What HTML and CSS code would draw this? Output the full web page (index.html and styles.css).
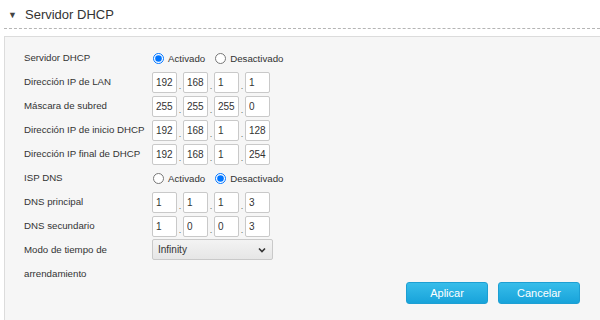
FILE: index.html
```html
<!DOCTYPE html>
<html lang="es">
<head>
  <meta charset="UTF-8">
  <meta name="viewport" content="width=device-width, initial-scale=1.0">
  <title>Servidor DHCP</title>
  <link rel="stylesheet" href="styles.css">
</head>
<body>
  <div class="section">
    <h2 class="section-title"><span class="caret">&#9660;</span>Servidor DHCP</h2>

    <div class="panel">
      <div class="form">
        <label class="form-label">Servidor DHCP</label>
        <div class="form-field">
          <label class="radio"><input type="radio" name="dhcp" checked> Activado</label>
          <label class="radio"><input type="radio" name="dhcp"> Desactivado</label>
        </div>

        <label class="form-label">Dirección IP de LAN</label>
        <div class="form-field ip">
          <input type="text" value="192"><span class="dot">.</span><input type="text" value="168"><span class="dot">.</span><input type="text" value="1"><span class="dot">.</span><input type="text" value="1">
        </div>

        <label class="form-label">Máscara de subred</label>
        <div class="form-field ip">
          <input type="text" value="255"><span class="dot">.</span><input type="text" value="255"><span class="dot">.</span><input type="text" value="255"><span class="dot">.</span><input type="text" value="0">
        </div>

        <label class="form-label">Dirección IP de inicio DHCP</label>
        <div class="form-field ip">
          <input type="text" value="192"><span class="dot">.</span><input type="text" value="168"><span class="dot">.</span><input type="text" value="1"><span class="dot">.</span><input type="text" value="128">
        </div>

        <label class="form-label">Dirección IP final de DHCP</label>
        <div class="form-field ip">
          <input type="text" value="192"><span class="dot">.</span><input type="text" value="168"><span class="dot">.</span><input type="text" value="1"><span class="dot">.</span><input type="text" value="254">
        </div>

        <label class="form-label">ISP DNS</label>
        <div class="form-field">
          <label class="radio"><input type="radio" name="isp"> Activado</label>
          <label class="radio"><input type="radio" name="isp" checked> Desactivado</label>
        </div>

        <label class="form-label">DNS principal</label>
        <div class="form-field ip">
          <input type="text" value="1"><span class="dot">.</span><input type="text" value="1"><span class="dot">.</span><input type="text" value="1"><span class="dot">.</span><input type="text" value="3">
        </div>

        <label class="form-label">DNS secundario</label>
        <div class="form-field ip">
          <input type="text" value="1"><span class="dot">.</span><input type="text" value="0"><span class="dot">.</span><input type="text" value="0"><span class="dot">.</span><input type="text" value="3">
        </div>

        <label class="form-label form-label--wrap">Modo de tiempo de arrendamiento</label>
        <div class="form-field form-field--top">
          <select class="select">
            <option>Infinity</option>
          </select>
        </div>
      </div>

      <div class="actions">
        <button class="btn">Aplicar</button>
        <button class="btn">Cancelar</button>
      </div>
    </div>
  </div>
</body>
</html>
```

FILE: styles.css
```css
* {
  box-sizing: border-box;
  margin: 0;
  padding: 0;
}

body {
  font-family: "Liberation Sans", Arial, sans-serif;
  color: #333;
  background: #fff;
}

/* Section header with the collapse caret */
.section {
  padding: 0 0 0 4px;
}

.section-title {
  display: flex;
  align-items: center;
  height: 29px;
  padding: 1px 0 0 4px;
  font-size: 13px;
  font-weight: normal;
  color: #333;
  border-bottom: 1px dashed #b5b5b5;
}

.caret {
  font-size: 9px;
  width: 17px;
  color: #444;
}

/* Grey panel holding the form */
.panel {
  margin-top: 7px;
  background: #f6f6f6;
  border-top: 1px solid #dcdcdc;
  border-left: 1px solid #dcdcdc;
  padding: 9px 20px 30px 19px;
  min-height: 300px;
}

.form {
  display: grid;
  grid-template-columns: 128px auto;
  grid-auto-rows: 24px;
  font-size: 9.7px;
}

.form-label {
  line-height: 24px;
  white-space: nowrap;
}

.form-label--wrap {
  grid-row: span 2;
  white-space: normal;
  max-width: 110px;
}

.form-field {
  display: flex;
  align-items: center;
}

.form-field--top {
  align-items: flex-start;
  padding-top: 1px;
}

/* Radio pairs */
.radio {
  display: flex;
  align-items: center;
  margin-right: 9px;
}

.radio input {
  width: 11px;
  height: 11px;
  margin: 0 4px 0 1px;
}

/* Four-box IP address */
.ip input {
  width: 25px;
  height: 21px;
  padding: 0 3px;
  border: 1px solid #c9c9c9;
  border-radius: 2px;
  background: #fff;
  font: 10px "Liberation Sans", Arial, sans-serif;
  color: #333;
}

.dot {
  width: 6px;
  align-self: flex-end;
  padding-bottom: 3px;
  text-align: center;
  color: #666;
  font-size: 9px;
}

.select {
  appearance: none;
  width: 121px;
  height: 21px;
  padding: 0 5px;
  border: 1px solid #c9c9c9;
  border-radius: 2px;
  font: 10px "Liberation Sans", Arial, sans-serif;
  color: #333;
  background:
    url("data:image/svg+xml,%3Csvg xmlns='http://www.w3.org/2000/svg' width='8' height='6' viewBox='0 0 8 6'%3E%3Cpath d='M1 1.5 4 4.5 7 1.5' fill='none' stroke='%23333' stroke-width='1.6'/%3E%3C/svg%3E") no-repeat right 6px center,
    linear-gradient(#f3f3f3, #e6e6e6);
}

/* Apply / cancel buttons */
.actions {
  display: flex;
  justify-content: flex-end;
  gap: 10px;
  margin-top: -4px;
}

.btn {
  width: 82px;
  height: 22px;
  border: 1px solid #1d9fd3;
  border-radius: 3px;
  background: linear-gradient(#37bdea, #18a3da);
  color: #fff;
  font: 11px "Liberation Sans", Arial, sans-serif;
}
```
